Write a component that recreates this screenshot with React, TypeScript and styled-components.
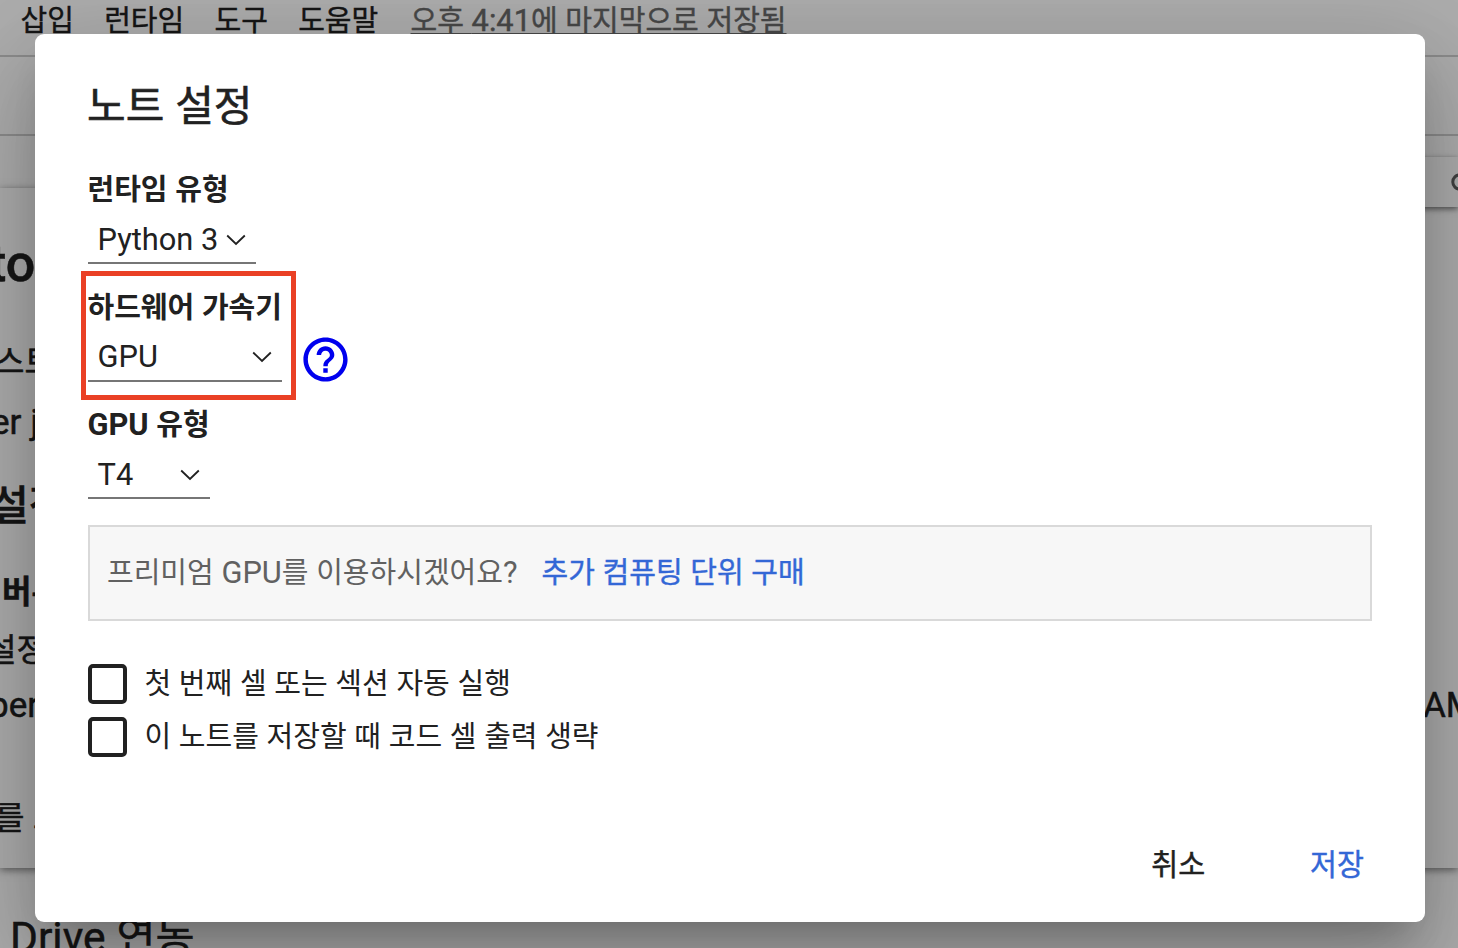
import React from "react";
import styled, { createGlobalStyle } from "styled-components";
import { MdHelpOutline } from "react-icons/md";

const GlobalStyle = createGlobalStyle`
  * {
    box-sizing: border-box;
  }

  body {
    margin: 0;
    overflow: hidden;
    background: #fff;
    color: #212121;
    font-family: Roboto, "Noto Sans CJK KR", sans-serif;
    font-size: 29px;
    word-spacing: 0.5px;
  }
`;

const Page = styled.div`
  position: relative;
  width: 1458px;
  height: 948px;
  overflow: hidden;
`;

const MenuBar = styled.nav`
  display: flex;
  align-items: center;
  height: 57px;
  padding: 0 0 13px 20.5px;
  border-bottom: 2px solid #cfcfcf;
  line-height: 40px;
  white-space: nowrap;
  -webkit-text-stroke: 0.4px;
`;

const MenuItem = styled.span`
  margin-right: 30.3px;
`;

const SavedAt = styled.span`
  margin-left: 2px;
  color: #6b6b6b;
  text-decoration: underline;
  text-decoration-thickness: 2px;
  text-underline-offset: 2px;
`;

const Toolbar = styled.div`
  height: 79px;
  border-bottom: 2px solid #cfcfcf;
`;

const Notebook = styled.main`
  display: flex;
  flex-direction: column;
  height: 812px;
  padding-top: 52px;
  -webkit-text-stroke: 0.5px;
`;

const Cell = styled.section`
  flex: none;
  height: 680px;
  background: #fff;
  box-shadow: 0 2px 8px rgba(0, 0, 0, 0.5);
`;

const CellLine = styled.div<{
  $gap?: number;
  $height: number;
  $size?: number;
  $shift: number;
  $weight?: number;
}>`
  display: flex;
  justify-content: space-between;
  height: ${(props) => props.$height}px;
  margin: ${(props) => props.$gap || 0}px 0 0 ${(props) => props.$shift}px;
  font-size: ${(props) => props.$size || 32}px;
  font-weight: ${(props) => props.$weight || 400};
  line-height: ${(props) => props.$height}px;
  white-space: nowrap;
  overflow: hidden;
`;

const LineEnd = styled.span`
  width: 35px;
`;

const NextHeading = styled.h2`
  margin: 40px 0 0 10px;
  font-size: 42.5px;
  font-weight: 400;
  line-height: 60px;
`;

const CellTools = styled.div`
  position: absolute;
  top: 157px;
  right: 0;
  width: 120px;
  height: 50px;
  display: flex;
  align-items: center;
  justify-content: flex-end;
  overflow: hidden;
  background: #fff;
  box-shadow: 0 2px 6px rgba(0, 0, 0, 0.55);
`;

const ToolIcon = styled.svg`
  flex: none;
  width: 18px;
  height: 18px;
  margin-right: -11px;
`;

const Backdrop = styled.div`
  position: absolute;
  inset: 0;
  padding: 34px 33px 26px 35px;
  background: rgba(0, 0, 0, 0.32);
`;

const Dialog = styled.div`
  display: flex;
  flex-direction: column;
  width: 1390px;
  height: 888px;
  padding: 40px 53px 27px;
  background: #fff;
  border-radius: 9px;
  box-shadow: 0 24px 33px -15px rgba(0, 0, 0, 0.2),
    0 53px 84px 7px rgba(0, 0, 0, 0.14), 0 20px 101px 18px rgba(0, 0, 0, 0.12);
`;

const Title = styled.h1`
  margin: 0 0 26px -1px;
  font-size: 42px;
  font-weight: 400;
  line-height: 66px;
  -webkit-text-stroke: 0.6px;
`;

const Field = styled.div`
  position: relative;
  display: flex;
  flex-direction: column;
  height: 117.5px;
`;

const Label = styled.label`
  margin-left: -0.5px;
  font-weight: 700;
  line-height: 48px;
`;

const Latin = styled.span`
  font-size: 30.8px;
`;

const SelectRow = styled.div`
  display: flex;
  align-items: center;
  height: 50px;
`;

const Select = styled.button<{ $width: number }>`
  flex: none;
  display: flex;
  align-items: center;
  justify-content: space-between;
  width: ${(props) => props.$width}px;
  height: 50px;
  padding: 3px 10px 0 9.5px;
  background: none;
  border: 0;
  border-bottom: 2px solid #767676;
  color: #212121;
  font-family: inherit;
  font-size: 30.8px;
  line-height: 44px;
  white-space: nowrap;
`;

const HelpLink = styled.a`
  display: flex;
  margin: 6px 0 0 17px;
  color: #0000ee;
`;

const Highlight = styled.div`
  position: absolute;
  top: -13px;
  left: -7px;
  width: 215px;
  height: 129px;
  border: 5px solid #ea4025;
`;

const Notice = styled.div`
  display: flex;
  align-items: center;
  flex: none;
  height: 96px;
  margin: 6px 0 37px;
  padding: 0 17px 6px;
  background: #f7f7f7;
  border: 2px solid #d9d9d9;
  color: #616161;
`;

const NoticeLink = styled.a`
  margin-left: 24px;
  color: #3367d6;
  -webkit-text-stroke: 0.4px;
`;

const CheckRow = styled.label`
  display: flex;
  align-items: center;
  height: 53px;
`;

const CheckBox = styled.span`
  width: 39px;
  height: 40px;
  margin-right: 17.5px;
  border: 4px solid #212121;
  border-radius: 5px;
`;

const CheckText = styled.span`
  padding-bottom: 6px;
`;

const Actions = styled.footer`
  display: flex;
  justify-content: flex-end;
  gap: 105px;
  margin-top: auto;
  padding-right: 8px;
`;

const Action = styled.button<{ $primary?: boolean }>`
  padding: 0;
  background: none;
  border: 0;
  color: ${(props) => (props.$primary ? "#3367d6" : "#212121")};
  font: inherit;
  font-size: 29.3px;
  line-height: 60px;
  -webkit-text-stroke: 0.4px;
`;

const Chevron: React.FC = () => (
  <svg width="20" height="12" viewBox="0 0 20 12" fill="none">
    <path d="M1.2 1.5 10 10l8.8-8.5" stroke="#212121" strokeWidth="1.8" />
  </svg>
);

const menu = ["삽입", "런타임", "도구", "도움말"];

const options = [
  "첫 번째 셀 또는 섹션 자동 실행",
  "이 노트를 저장할 때 코드 셀 출력 생략",
];

const App: React.FC = () => (
  <>
    <GlobalStyle />
    <Page>
      <MenuBar>
        {menu.map((item) => (
          <MenuItem key={item}>{item}</MenuItem>
        ))}
        <SavedAt>
          오후 <Latin>4:41</Latin>에 마지막으로 저장됨
        </SavedAt>
      </MenuBar>
      <Toolbar />
      <Notebook>
        <Cell>
          <CellLine $gap={36} $height={80} $size={52} $weight={500} $shift={-11}>
            to
          </CellLine>
          <CellLine $gap={28} $height={60} $shift={-5}>
            스트
          </CellLine>
          <CellLine $gap={1} $height={60} $size={35} $shift={-9}>
            er j
          </CellLine>
          <CellLine $gap={18} $height={70} $size={41} $shift={-9} $weight={500}>
            설정
          </CellLine>
          <CellLine $gap={21} $height={60} $weight={700} $shift={2}>
            버튼
          </CellLine>
          <CellLine $height={56} $shift={-13}>
            설정
          </CellLine>
          <CellLine $height={56} $size={35} $shift={-11}>
            <span>per</span>
            <LineEnd>AM</LineEnd>
          </CellLine>
          <CellLine $gap={54} $height={60} $shift={-5}>
            를 스
          </CellLine>
        </Cell>
        <NextHeading>Drive 연동</NextHeading>
      </Notebook>
      <CellTools>
        <ToolIcon viewBox="0 0 18 18" fill="none">
          <circle cx="9" cy="9" r="7.2" stroke="#5f5f5f" strokeWidth="3" />
        </ToolIcon>
      </CellTools>
      <Backdrop>
        <Dialog role="dialog">
          <Title>노트 설정</Title>
          <Field>
            <Label>런타임 유형</Label>
            <SelectRow>
              <Select $width={168}>
                Python 3 <Chevron />
              </Select>
            </SelectRow>
          </Field>
          <Field>
            <Label>하드웨어 가속기</Label>
            <SelectRow>
              <Select $width={194}>
                GPU <Chevron />
              </Select>
              <HelpLink>
                <MdHelpOutline size={53} />
              </HelpLink>
            </SelectRow>
            <Highlight />
          </Field>
          <Field>
            <Label>
              <Latin>GPU</Latin> 유형
            </Label>
            <SelectRow>
              <Select $width={122}>
                T4 <Chevron />
              </Select>
            </SelectRow>
          </Field>
          <Notice>
            <span>
              프리미엄 <Latin>GPU</Latin>를 이용하시겠어요<Latin>?</Latin>
            </span>
            <NoticeLink>추가 컴퓨팅 단위 구매</NoticeLink>
          </Notice>
          {options.map((option) => (
            <CheckRow key={option}>
              <CheckBox />
              <CheckText>{option}</CheckText>
            </CheckRow>
          ))}
          <Actions>
            <Action>취소</Action>
            <Action $primary>저장</Action>
          </Actions>
        </Dialog>
      </Backdrop>
    </Page>
  </>
);

export default App;
